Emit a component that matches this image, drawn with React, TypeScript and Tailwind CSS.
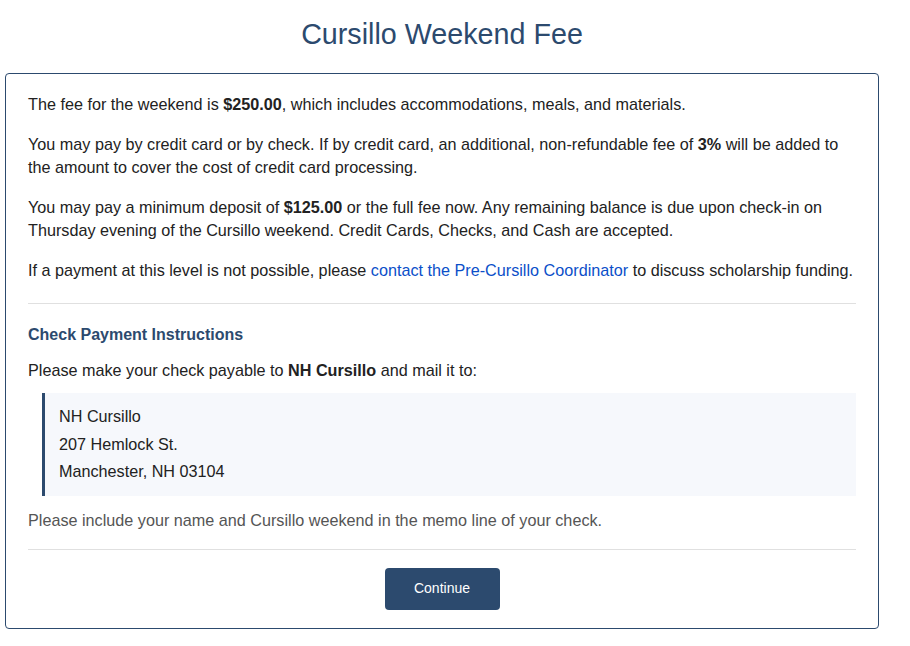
export default function App() {
  return (
    <div className="min-h-screen bg-white font-['Liberation_Sans',Arial,sans-serif] text-[#222]">
      <div className="w-[874px] ml-[5px] pt-[16px] pb-[16px]">
        <h1 className="text-center text-[28.7px] leading-[36px] text-[#2c4a6e] mb-[21px]">Cursillo Weekend Fee</h1>
        <div className="border border-[#2c4a6e] rounded-[4px] px-[22px] pt-[19px] pb-[18px] text-[16.2px] leading-[23px]">
          <p className="mb-[17px]">
            The fee for the weekend is <b>$250.00</b>, which includes accommodations, meals, and materials.
          </p>
          <p className="mb-[17px]">
            You may pay by credit card or by check. If by credit card, an additional, non-refundable fee of <b>3%</b> will be added to the amount to cover the cost of credit card processing.
          </p>
          <p className="mb-[17px]">
            You may pay a minimum deposit of <b>$125.00</b> or the full fee now. Any remaining balance is due upon check-in on Thursday evening of the Cursillo weekend. Credit Cards, Checks, and Cash are accepted.
          </p>
          <p>
            If a payment at this level is not possible, please{" "}
            <a href="#" className="text-[#0b4fc9]">contact the Pre-Cursillo Coordinator</a> to discuss scholarship funding.
          </p>
          <hr className="border-t border-[#e0e0e0] mt-[21px] mb-[20px]" />
          <h2 className="font-bold text-[16px] leading-[22px] text-[#2c4a6e] mb-[13px]">Check Payment Instructions</h2>
          <p className="mb-[11px]">
            Please make your check payable to <b>NH Cursillo</b> and mail it to:
          </p>
          <div className="ml-[14px] border-l-[3px] border-[#2c4a6e] bg-[#f6f8fc] pl-[14px] py-[10px] leading-[27.5px]">
            <div>NH Cursillo</div>
            <div>207 Hemlock St.</div>
            <div>Manchester, NH 03104</div>
          </div>
          <p className="mt-[13px] text-[#555]">Please include your name and Cursillo weekend in the memo line of your check.</p>
          <hr className="border-t border-[#e0e0e0] mt-[17px] mb-[18px]" />
          <div className="flex justify-center">
            <button className="w-[115px] h-[42px] rounded-[4px] bg-[#2c4a6e] text-white text-[14px]">Continue</button>
          </div>
        </div>
      </div>
    </div>
  );
}
